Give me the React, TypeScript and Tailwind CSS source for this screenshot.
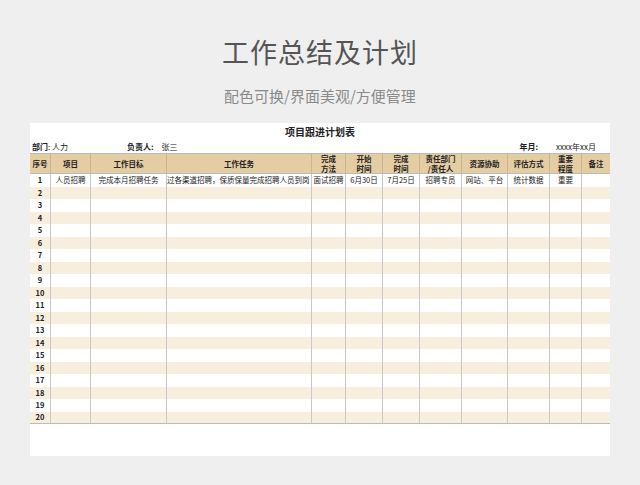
const cols = "grid grid-cols-[21px_40px_76px_145px_34px_37px_37px_42px_46px_42px_32px_28px]";
const heads = ["序号","项目","工作目标","工作任务","完成\n方法","开始\n时间","完成\n时间","责任部门\n/责任人","资源协助","评估方式","重要\n程度","备注"];
const first = ["1","人员招聘","完成本月招聘任务","过各渠道招聘，保质保量完成招聘人员到岗","面试招聘","6月30日","7月25日","招聘专员","网站、平台","统计数据","重要",""];
export default function App() {
  const rows = Array.from({ length: 20 }, (_, i) => i === 0 ? first : [String(i + 1), "", "", "", "", "", "", "", "", "", "", ""]);
  return (
    <div className="w-[640px] h-[485px] bg-[#efefef] flex flex-col items-center" style={{ fontFamily: '"Noto Sans CJK SC", "Noto Sans", sans-serif' }}>
      <div className="mt-[34px] text-[27px] leading-[36px] text-[#555] tracking-[1px]">工作总结及计划</div>
      <div className="mt-[16px] text-[15px] leading-[20px] text-[#8a8a8a]">配色可换/界面美观/方便管理</div>
      <div className="mt-[17px] w-[580px] h-[333px] bg-white flex flex-col">
        <div className="h-[16px] mt-[1px] text-center text-[10px] font-bold leading-[16px] text-[#222]">项目跟进计划表</div>
        <div className="h-[13px] flex text-[8px] leading-[13px] text-[#222]">
          <span className="w-[97px] pl-[2px] font-bold">部门<span className="font-normal">: 人力</span></span>
          <span className="font-bold">负责人:</span><span className="ml-[8px]">张三</span>
          <span className="ml-auto font-bold">年月:</span><span className="ml-[18px] mr-[14px]">xxxx年xx月</span>
        </div>
        <div className={`${cols} h-[21px] bg-[#e5cda3] border-y border-[#bbb]`}>
          {heads.map((h, i) => (
            <div key={i} className="border-r border-[#c9b48f] last:border-r-0 flex items-center justify-center text-center whitespace-pre text-[7.5px] leading-[9.5px] font-bold text-[#222]">{h}</div>
          ))}
        </div>
        {rows.map((r, ri) => (
          <div key={ri} className={`${cols} h-[12.5px] ${ri % 2 === 1 ? "bg-[#f8eedd]" : "bg-white"} ${ri === 19 ? "border-b border-[#bbb]" : ""}`}>
            {r.map((c, ci) => (
              <div key={ci} className={`border-r border-[#c8c8c8] last:border-r-0 overflow-hidden whitespace-nowrap flex items-center ${ci === 3 ? "justify-start" : "justify-center"} text-[7.5px] leading-[12px] text-[#222] ${ci === 0 ? "font-bold" : ""}`}>{c}</div>
            ))}
          </div>
        ))}
      </div>
    </div>
  );
}
